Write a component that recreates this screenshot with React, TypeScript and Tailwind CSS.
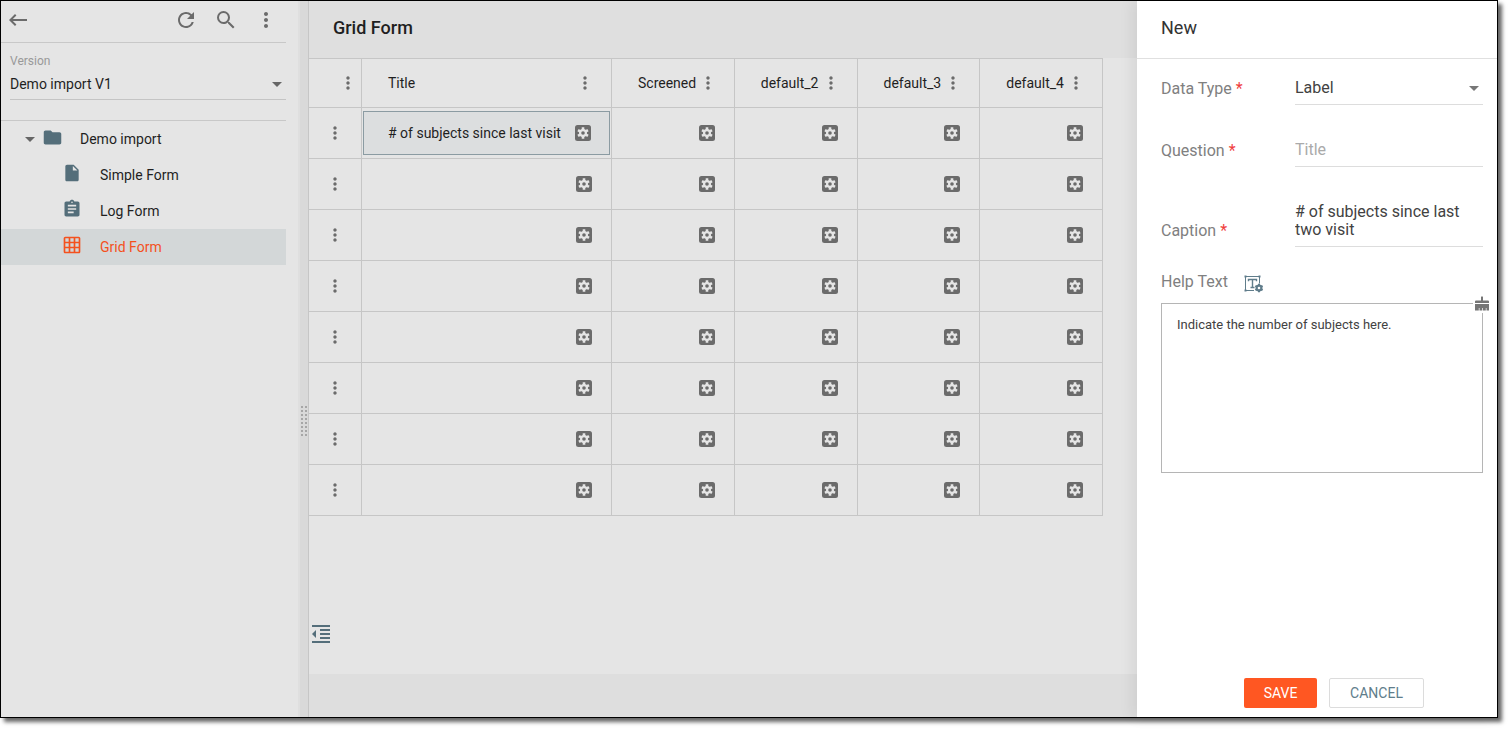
import type { ReactNode } from "react";
import {
  MdArrowDropDown,
  MdAssignment,
  MdFolder,
  MdFormatIndentDecrease,
  MdGridOn,
  MdInsertDriveFile,
  MdKeyboardBackspace,
  MdMoreVert,
  MdRefresh,
  MdSearch,
} from "react-icons/md";

const columns = ["Title", "Screened", "default_2", "default_3", "default_4"];
const rows = ["# of subjects since last visit", "", "", "", "", "", "", ""];

function IconButton({ label, children }: { label: string; children: ReactNode }) {
  return (
    <button type="button" aria-label={label} className="block shrink-0 text-[#6b6b6b]">
      {children}
    </button>
  );
}

function CellSettingsIcon() {
  return (
    <svg width="16" height="16" viewBox="0 0 16 16">
      <rect width="16" height="16" rx="2.5" fill="currentColor" />
      <g className="text-[#e5e5e5]" stroke="currentColor" strokeWidth="2.6">
        <path d="M8 2.2v11.6M3 5.1l10 5.8M3 10.9l10-5.8" />
        <circle cx="8" cy="8" r="4" fill="currentColor" stroke="none" />
      </g>
      <circle cx="8" cy="8" r="1.8" fill="currentColor" />
    </svg>
  );
}

function TreeItem({ icon, label, active }: { icon: ReactNode; label: string; active?: boolean }) {
  return (
    <li>
      <a
        href="#"
        aria-current={active ? "page" : undefined}
        className={
          active
            ? "flex h-9 items-center gap-[18px] bg-[#d3d7d8] pl-[61px] text-[#f4511e]"
            : "flex h-9 items-center gap-[18px] pl-[61px]"
        }
      >
        <span className={active ? "-mt-1" : "-mt-1 text-[#546e7a]"}>{icon}</span>
        {label}
      </a>
    </li>
  );
}

function Sidebar() {
  return (
    <aside className="w-[297px] shrink-0 bg-[#e5e5e5] pr-3 text-sm">
      <div className="flex h-[42px] items-center border-b border-[#c8c8c8] pb-1 pl-[5px] pr-2">
        <IconButton label="Back">
          <MdKeyboardBackspace className="size-6" />
        </IconButton>
        <div className="ml-auto flex gap-4">
          <IconButton label="Refresh">
            <MdRefresh className="size-6" />
          </IconButton>
          <IconButton label="Search">
            <MdSearch className="size-6" />
          </IconButton>
          <IconButton label="More">
            <MdMoreVert className="size-6" />
          </IconButton>
        </div>
      </div>
      <div className="h-[78px] border-b border-[#c8c8c8] pl-[9px] pt-[10px]">
        <label htmlFor="version" className="block text-xs leading-4 text-[#999]">
          Version
        </label>
        <div className="relative">
          <select
            id="version"
            className="block h-[31px] w-full appearance-none border-b border-[#c4c4c4] bg-transparent leading-5 outline-none"
          >
            <option>Demo import V1</option>
          </select>
          <MdArrowDropDown className="pointer-events-none absolute -right-[3px] top-[3px] size-6 text-[#666]" />
        </div>
      </div>
      <nav aria-label="Forms">
        <a href="#" className="flex h-9 items-center pl-[17px]">
          <MdArrowDropDown className="size-6 text-[#666]" />
          <MdFolder className="-mt-1 mr-[17px] size-[21px] text-[#546e7a]" />
          Demo import
        </a>
        <ul>
          <TreeItem icon={<MdInsertDriveFile className="size-5" />} label="Simple Form" />
          <TreeItem icon={<MdAssignment className="size-5" />} label="Log Form" />
          <TreeItem icon={<MdGridOn className="size-5" />} label="Grid Form" active />
        </ul>
      </nav>
    </aside>
  );
}

function Splitter() {
  return (
    <div
      role="separator"
      aria-orientation="vertical"
      className="w-[10px] shrink-0 border-l-2 border-[#dfdfdf] bg-[#d9d9d9] pl-px pt-[405px]"
    >
      <svg width="6" height="30" fill="#a6a6a6">
        {[0, 4, 8, 12, 16, 20, 24, 28].map((y) => (
          <g key={y}>
            <rect x="0" y={y} width="2" height="2" />
            <rect x="4" y={y} width="2" height="2" />
          </g>
        ))}
      </svg>
    </div>
  );
}

function GridTable() {
  return (
    <table className="w-[794px] table-fixed border-separate border-spacing-0 text-sm">
      <colgroup>
        <col className="w-[53px]" />
        <col className="w-[250px]" />
        <col />
        <col />
        <col />
        <col />
      </colgroup>
      <thead>
        <tr>
          <th className="h-[50px] border-y border-r border-[#c6c6c6] p-0 pr-[3px]">
            <div className="flex justify-end">
              <IconButton label="Table options">
                <MdMoreVert className="size-5" />
              </IconButton>
            </div>
          </th>
          {columns.map((name) => (
            <th key={name} scope="col" className="h-[50px] border-y border-r border-[#c6c6c6] p-0 font-normal">
              <div className="flex items-center justify-between pl-[26px] pr-4">
                {name}
                <IconButton label={`${name} options`}>
                  <MdMoreVert className="size-5" />
                </IconButton>
              </div>
            </th>
          ))}
        </tr>
      </thead>
      <tbody>
        {rows.map((title, i) => (
          <tr key={i}>
            <td className="h-[51px] border-b border-r border-[#c6c6c6] p-0">
              <div className="flex justify-center">
                <IconButton label={`Row ${i + 1} options`}>
                  <MdMoreVert className="size-5" />
                </IconButton>
              </div>
            </td>
            {columns.map((name, c) => (
              <td key={name} className="h-[51px] border-b border-r border-[#c6c6c6] p-0">
                <div
                  className={
                    title && c === 0
                      ? "mx-px flex h-11 items-center justify-between border border-[#8b9ba2] bg-[#dcdedf] pl-6 pr-[18px]"
                      : "flex items-center justify-end pr-[19px]"
                  }
                >
                  {c === 0 && title}
                  <IconButton label={`Edit ${name}, row ${i + 1}`}>
                    <CellSettingsIcon />
                  </IconButton>
                </div>
              </td>
            ))}
          </tr>
        ))}
      </tbody>
    </table>
  );
}

function Required() {
  return <span className="text-[#f03e3e]">*</span>;
}

function TextSettingsIcon() {
  return (
    <svg width="20" height="18" viewBox="0 0 20 18" fill="none" stroke="#607d8b">
      <path d="M15.5 8.5V1.5H1.5V15.5H10" />
      <path d="M0.5 0.5h2v2h-2zM14.5 0.5h2v2h-2zM0.5 14.5h2v2h-2z" fill="#607d8b" stroke="none" />
      <path d="M4.5 6.2V4.5h8v1.7M8.5 4.5v8M6.5 12.5h4" strokeWidth="1.4" />
      <circle cx="15" cy="13" r="2.4" strokeWidth="2.2" />
      <path d="M15 8.8v1.7M15 15.5v1.7M11.4 10.9l1.4.8M17.2 14.3l1.4.8M11.4 15.1l1.4-.8M17.2 11.7l1.4-.8" strokeWidth="2" />
    </svg>
  );
}

function BrushIcon() {
  return (
    <svg width="14" height="15" viewBox="0 0 14 15" fill="#757575">
      <path d="M6 1q1-1.6 2 0v3.5h5q1 0 1 1V7H0V5.500q0-1 1-1h5z" />
      <path d="M0 8h14v6.500h-2.500V12h-.7v2.500H8V12h-.7v2.500H4.500V12h-.7v2.500H0z" />
    </svg>
  );
}

function Drawer() {
  return (
    <aside className="z-10 flex w-[360px] shrink-0 flex-col bg-white text-[#424242] shadow-[-4px_0_14px_rgba(0,0,0,0.08)]">
      <h2 className="flex h-[58px] items-center border-b border-[#e0e0e0] px-6 pb-1 text-lg text-[#333]">New</h2>
      <form className="flex flex-1 flex-col pl-6 pr-[14px] pt-[14px]">
        <div className="flex h-8 items-center">
          <label htmlFor="type" className="w-[134px] shrink-0 text-[#808080]">
            Data Type <Required />
          </label>
          <div className="relative flex-1">
            <select
              id="type"
              className="block h-8 w-full appearance-none border-b border-[#ddd] bg-transparent pb-[2px] outline-none"
            >
              <option>Label</option>
            </select>
            <MdArrowDropDown className="pointer-events-none absolute -right-[3px] top-[3px] size-6 text-[#777]" />
          </div>
        </div>
        <div className="mt-[30px] flex h-8 items-center">
          <label htmlFor="question" className="w-[134px] shrink-0 text-[#808080]">
            Question <Required />
          </label>
          <input
            id="question"
            placeholder="Title"
            className="h-8 min-w-0 flex-1 border-b border-[#ddd] pb-[2px] outline-none placeholder:text-[#aaa]"
          />
        </div>
        <div className="mt-9 flex items-end">
          <label htmlFor="caption" className="w-[134px] shrink-0 pb-1 text-[#808080]">
            Caption <Required />
          </label>
          <textarea
            id="caption"
            rows={2}
            defaultValue="# of subjects since last two visit"
            className="h-11 min-w-0 flex-1 resize-none overflow-hidden border-b border-[#ddd] leading-[18px] outline-none"
          />
        </div>
        <div className="mt-[23px] flex items-center gap-4 text-[#808080]">
          <label htmlFor="help">Help Text</label>
          <button type="button" aria-label="Format help text" className="pt-1">
            <TextSettingsIcon />
          </button>
        </div>
        <div className="relative mt-[9px]">
          <textarea
            id="help"
            defaultValue="Indicate the number of subjects here."
            className="block h-[170px] w-full resize-none border border-[#b5b5b5] px-[15px] py-[11px] text-[13px] leading-5 outline-none"
          />
          <button type="button" aria-label="Clear formatting" className="absolute -right-[6px] -top-[7px] bg-white pb-[2px] pl-[2px]">
            <BrushIcon />
          </button>
        </div>
        <div className="mt-auto flex gap-3 pb-[9px] pl-[83px] text-sm">
          <button type="submit" className="h-[30px] w-[73px] rounded-xs bg-[#ff5722] text-white">
            SAVE
          </button>
          <button type="button" className="h-[30px] w-[95px] rounded-xs border border-[#dcdcdc] text-[#607d8b]">
            CANCEL
          </button>
        </div>
      </form>
    </aside>
  );
}

export default function App() {
  return (
    <div className="flex min-h-screen bg-white pb-3 pr-3 font-[Roboto,sans-serif] text-[#1f1f1f]">
      <div className="flex min-w-0 flex-1 border border-black shadow-[4px_4px_4px_rgba(0,0,0,0.6)]">
        <Sidebar />
        <Splitter />
        <main className="flex min-w-0 flex-1 flex-col border-l border-[#c6c6c6] bg-[#e5e5e5]">
          <h1 className="flex h-[57px] items-center bg-[#dfdfdf] pb-1 pl-6 text-lg font-medium">Grid Form</h1>
          <GridTable />
          <div className="mt-auto pb-7">
            <button type="button" aria-label="Collapse panel" className="block text-[#546e7a]">
              <MdFormatIndentDecrease className="size-6" />
            </button>
          </div>
          <footer className="h-[43px] bg-[#dedede]" />
        </main>
        <Drawer />
      </div>
    </div>
  );
}
